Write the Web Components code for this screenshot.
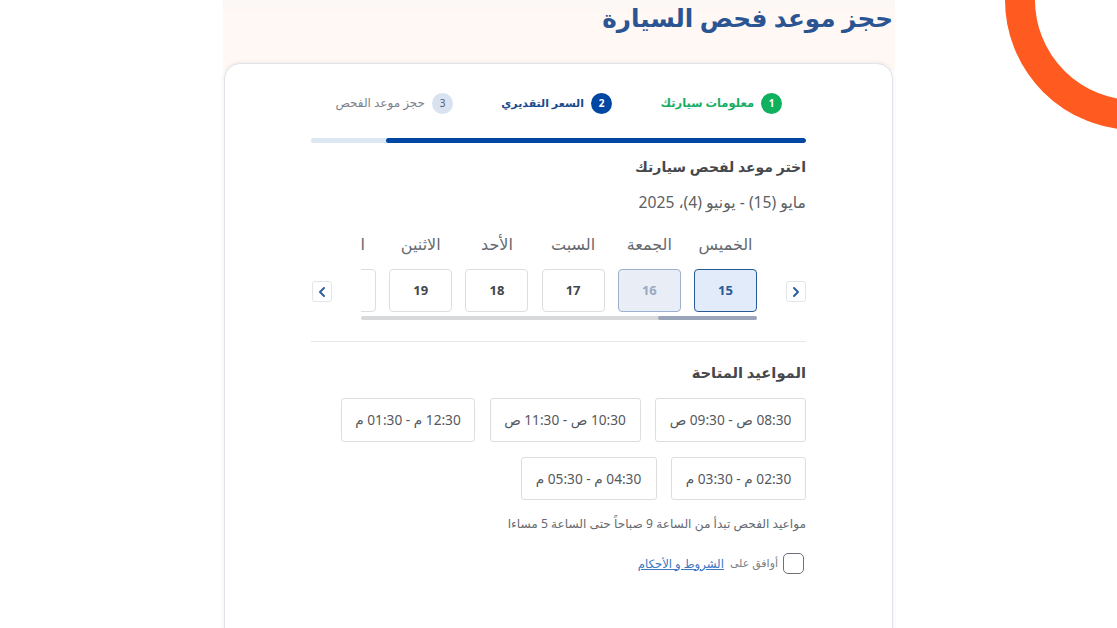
<!DOCTYPE html>
<html lang="ar" dir="rtl">
<head>
<meta charset="utf-8">
<title>حجز موعد فحص السيارة</title>
<style>
  html, body { margin: 0; padding: 0; height: 100%; overflow: hidden; background: #fff; }
  body { font-family: "Noto Sans", "DejaVu Sans", sans-serif; }
</style>
</head>
<body>
<booking-page>
  <booking-stepper></booking-stepper>
  <day-picker></day-picker>
  <slot-list></slot-list>
  <terms-check></terms-check>
</booking-page>

<script>
const FONT = '"Noto Sans", "DejaVu Sans", sans-serif';

class BookingPage extends HTMLElement {
    connectedCallback() {
        this.attachShadow({ mode: 'open' });
        this.shadowRoot.innerHTML = `
            <style>
                :host {
                    display: block;
                    position: relative;
                    height: 628px;
                    overflow: hidden;
                    font-family: ${FONT};
                }
                .ring {
                    position: absolute;
                    left: 1005px;
                    top: -130px;
                    width: 200px;
                    height: 200px;
                    border: 30px solid #ff5a1f;
                    border-radius: 50%;
                }
                .panel {
                    width: 672px;
                    margin-right: 222px;
                    height: 628px;
                    background: linear-gradient(#fbf8f6 0, #fff8f4 12px, #fff8f4 70px, #fff 71px);
                    box-sizing: border-box;
                    padding: 0 2px 0 1px;
                }
                h1 {
                    margin: 0;
                    height: 63px;
                    font-size: 24.7px;
                    line-height: 36px;
                    font-weight: 700;
                    color: #2a5592;
                }
                .card {
                    height: 600px;
                    background: #fff;
                    border: 1px solid #e0e3ea;
                    border-radius: 16px;
                    box-shadow: 0 0 4px rgba(40, 60, 100, .10);
                    box-sizing: border-box;
                    padding: 28px 86px 0 86px;
                }
            </style>
            <div class="ring"></div>
            <div class="panel">
                <h1>حجز موعد فحص السيارة</h1>
                <div class="card"><slot></slot></div>
            </div>
        `;
    }
}

class BookingStepper extends HTMLElement {
    connectedCallback() {
        this.attachShadow({ mode: 'open' });
        this.shadowRoot.innerHTML = `
            <style>
                :host { display: block; }
                .steps {
                    display: flex;
                    height: 46px;
                    padding: 0 24px 0 0;
                }
                .step {
                    display: flex;
                    align-items: flex-start;
                    gap: 7px;
                    font-size: 11.5px;
                    line-height: 22px;
                    font-weight: 700;
                }
                .num {
                    flex: none;
                    width: 21px;
                    height: 21px;
                    margin-top: 1px;
                    border-radius: 50%;
                    font-size: 10px;
                    line-height: 21px;
                    text-align: center;
                    color: #fff;
                }
                .s1 { width: 170px; color: #17ad62; }
                .s1 .num { background: #0fb15f; }
                .s2 { width: 159px; color: #1c4a8c; font-size: 11px; }
                .s2 .num { background: #0047a3; }
                .s3 { color: #7d828a; font-weight: 400; font-size: 12px; }
                .s3 .num { background: #d8e2f0; color: #556070; }
                .bar {
                    height: 5px;
                    margin-bottom: 12px;
                    border-radius: 3px;
                    background: #dde6f3;
                    overflow: hidden;
                }
                .fill { width: 420px; height: 5px; background: #0047a3; border-radius: 3px; }
            </style>
            <div class="steps">
                <div class="step s1"><span class="num">1</span>معلومات سيارتك</div>
                <div class="step s2"><span class="num">2</span>السعر التقديري</div>
                <div class="step s3"><span class="num">3</span>حجز موعد الفحص</div>
            </div>
            <div class="bar"><div class="fill"></div></div>
        `;
    }
}

class DayPicker extends HTMLElement {
    connectedCallback() {
        const days = [
            ['الخميس', 15, 'selected'],
            ['الجمعة', 16, 'off'],
            ['السبت', 17, ''],
            ['الأحد', 18, ''],
            ['الاثنين', 19, ''],
            ['الثلاثاء', 20, '']
        ];
        const cols = days.map(d => `
            <div class="day ${d[2]}">
                <div class="name">${d[0]}</div>
                <div class="box">${d[1]}</div>
            </div>`).join('');
        this.attachShadow({ mode: 'open' });
        this.shadowRoot.innerHTML = `
            <style>
                :host { display: block; }
                h2 {
                    margin: 0;
                    font-size: 14px;
                    line-height: 24px;
                    font-weight: 700;
                    color: #45484c;
                }
                .range {
                    margin-top: 11px;
                    font-size: 15.7px;
                    line-height: 24px;
                    color: #5c5f64;
                }
                .row { display: flex; align-items: flex-start; margin-top: 18px; }
                .arrow {
                    flex: none;
                    width: 20px;
                    height: 21px;
                    margin-top: 49px;
                    box-sizing: border-box;
                    border: 1px solid #e3e5e9;
                    border-radius: 3px;
                    display: flex;
                    align-items: center;
                    justify-content: center;
                }
                .strip-wrap { width: 396px; margin: 0 29px 0 29px; }
                .strip { display: flex; gap: 13.2px; overflow: hidden; }
                .day { flex: none; width: 63px; text-align: center; }
                .name { font-size: 16px; line-height: 24px; height: 24px; margin-bottom: 13px; color: #66696e; white-space: nowrap; }
                .box {
                    height: 43px;
                    box-sizing: border-box;
                    border: 1px solid #dcdee2;
                    border-radius: 4px;
                    font-size: 13px;
                    font-weight: 700;
                    line-height: 41px;
                    color: #44474c;
                }
                .selected .box { background: #e1ebfa; border-color: #2a5a96; color: #2a5a96; }
                .off .box { background: #e8edf6; border-color: #9db1cf; color: #9aaac2; }
                .track { height: 4px; margin-top: 4px; background: #d8d9db; border-radius: 2px; }
                .thumb { width: 99px; height: 4px; background: #9aa5b8; border-radius: 2px; }
                hr { margin: 21px 0 0; border: 0; border-top: 1px solid #e5e6e9; }
            </style>
            <h2>اختر موعد لفحص سيارتك</h2>
            <div class="range">مايو (15) - يونيو (4)، 2025</div>
            <div class="row">
                <div class="arrow"><svg width="8" height="12" viewBox="0 0 8 12" fill="none" stroke="#2d5f9e" stroke-width="2" stroke-linecap="round" stroke-linejoin="round"><path d="M2 2l4 4-4 4"/></svg></div>
                <div class="strip-wrap">
                    <div class="strip">${cols}</div>
                    <div class="track"><div class="thumb"></div></div>
                </div>
                <div class="arrow"><svg width="8" height="12" viewBox="0 0 8 12" fill="none" stroke="#2d5f9e" stroke-width="2" stroke-linecap="round" stroke-linejoin="round"><path d="M6 2 2 6l4 4"/></svg></div>
            </div>
            <hr>
        `;
    }
}

class SlotList extends HTMLElement {
    connectedCallback() {
        const slots = [
            ['08:30 ص - 09:30 ص', 151],
            ['10:30 ص - 11:30 ص', 151],
            ['12:30 م - 01:30 م', 134],
            ['02:30 م - 03:30 م', 135],
            ['04:30 م - 05:30 م', 136]
        ];
        this.attachShadow({ mode: 'open' });
        this.shadowRoot.innerHTML = `
            <style>
                :host { display: block; }
                h2 {
                    margin: 18px 0 0;
                    font-size: 14.7px;
                    line-height: 24px;
                    font-weight: 700;
                    color: #45484c;
                }
                .slots { display: flex; flex-wrap: wrap; gap: 15px 14.5px; margin-top: 14px; }
                .slot {
                    height: 43.5px;
                    box-sizing: border-box;
                    border: 1px solid #dcdee2;
                    border-radius: 3px;
                    font-size: 13.7px;
                    line-height: 41px;
                    text-align: center;
                    color: #55585d;
                    white-space: nowrap;
                }
                .note { margin-top: 14px; font-size: 12.15px; line-height: 20px; color: #66696e; }
            </style>
            <h2>المواعيد المتاحة</h2>
            <div class="slots">
                ${slots.map(s => `<div class="slot" style="width:${s[1]}px">${s[0]}</div>`).join('')}
            </div>
            <div class="note">مواعيد الفحص تبدأ من الساعة 9 صباحاً حتى الساعة 5 مساءا</div>
        `;
    }
}

class TermsCheck extends HTMLElement {
    connectedCallback() {
        this.attachShadow({ mode: 'open' });
        this.shadowRoot.innerHTML = `
            <style>
                :host {
                    display: flex;
                    align-items: center;
                    gap: 5px;
                    margin-top: 19px;
                    padding-right: 2px;
                    font-size: 11px;
                    line-height: 18px;
                    color: #7b7e83;
                }
                .box {
                    width: 21px;
                    height: 21px;
                    box-sizing: border-box;
                    border: 1.5px solid #6d7076;
                    border-radius: 5px;
                }
                span:not(.box), a { margin-top: -2px; }
                a { color: #3a78c4; font-size: 11.7px; margin-right: 1px; }
            </style>
            <span class="box"></span>
            <span>أوافق على</span>
            <a href="#">الشروط و الأحكام</a>
        `;
    }
}

customElements.define('booking-page', BookingPage);
customElements.define('booking-stepper', BookingStepper);
customElements.define('day-picker', DayPicker);
customElements.define('slot-list', SlotList);
customElements.define('terms-check', TermsCheck);
</script>
</body>
</html>
